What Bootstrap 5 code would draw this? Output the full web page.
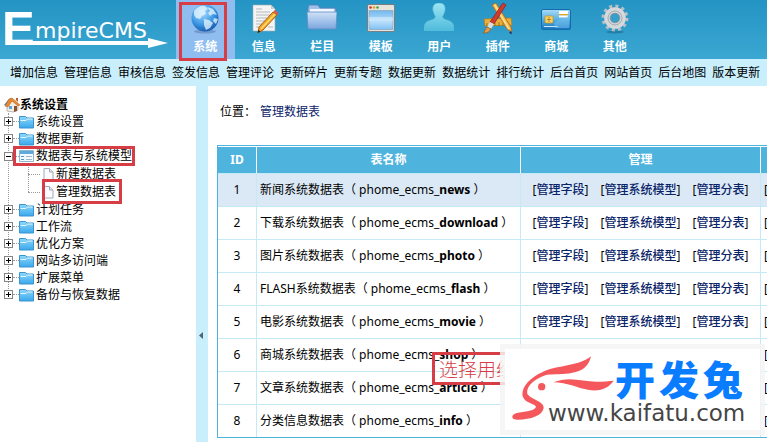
<!DOCTYPE html>
<html lang="zh-CN">
<head>
<meta charset="utf-8">
<meta name="viewport" content="width=device-width, initial-scale=1">
<title>EmpireCMS</title>
<link href="https://cdn.jsdelivr.net/npm/bootstrap@5.3.0/dist/css/bootstrap.min.css" rel="stylesheet">
<style>
  :root { --red: #d63d45; --pale: #c9effd; --edge: #4eb4de; }
  body { font: 12px/18px "Noto Sans", "Noto Sans CJK SC", sans-serif; color: #000; background: #fff; overflow: hidden; }
  a { color: inherit; text-decoration: none; }
  svg { display: block; flex: none; }
  .topbar { height: 59px; background: linear-gradient(#2494c4, #3ba7d2); }
  .brand { width: 176px; }
  .tabs { width: 468px; }
  .tab { color: #fff; font-weight: 700; padding-top: 3px; }
  .tab span { line-height: 18px; margin-top: 3px; }
  .tab.active { background: #90bdf0; }
  .marked { position: relative; }
  .marked::after { content: ""; position: absolute; border: 3px solid var(--red); pointer-events: none; z-index: 2; }
  .tab.marked::after { inset: 2px 8px -2px 3px; }
  .submenu { height: 27px; gap: 6px; padding-left: 10px; background: var(--pale); white-space: nowrap; }
  .side { width: 196px; padding: 10px 0 0 4px; }
  .splitter { width: 12px; background: var(--pale); padding-top: 241px; }
  .splitter button { border: 0; background: none; padding: 0 0 0 2px; }
  .tree, .tree ul { list-style: none; margin: 0; padding: 0; }
  .tree { position: relative; }
  .tree::before { content: ""; position: absolute; left: 4px; top: 0; height: 178px; border-left: 1px dotted #999; }
  .node { height: 17px; }
  .node.tall { height: 18px; }
  .toggle { position: relative; width: 9px; height: 9px; padding: 0; border: 1px solid #848484; background: #fff; }
  .toggle::before { content: ""; position: absolute; left: 1px; top: 3px; width: 5px; height: 1px; background: #000; }
  .toggle.plus::after { content: ""; position: absolute; left: 3px; top: 1px; width: 1px; height: 5px; background: #000; }
  .dots { width: 6px; border-top: 1px dotted #999; }
  .node a { gap: 2px; }
  .branch a.marked::after { inset: -1px -3px -1px -6px; }
  .leaf { height: 18px; padding-left: 24px; }
  .leaf .dots { width: 12px; }
  .leaf-line { position: relative; }
  .leaf-line::before { content: ""; position: absolute; left: 24px; top: 0; height: 27px; border-left: 1px dotted #999; }
  .leaf a.marked::after { inset: -4px -6px -3px 2px; }
  .crumbs { padding: 17px 0 0 12px; gap: 4px; }
  .navy { color: #0b2468; }
  .grid { margin: 24px 0 0 9px; width: 680px; table-layout: fixed; border: 1px solid var(--edge); border-collapse: separate; border-spacing: 0; }
  .grid th { height: 27px; padding: 0; color: #fff; background: var(--edge); text-align: center; border-top: 1px solid #fff; border-right: 1px solid #fff; }
  .grid td { height: 33px; padding: 0 3px; border-right: 1px solid #c6e9f6; border-top: 1px solid #c6e9f6; white-space: nowrap; }
  .grid tr:first-child td { background: #dbe9f6; }
  .links { gap: 12px; }
  .links a { font-weight: 500; }
  .note { position: absolute; left: 224px; top: 266px; padding: 0 4px; height: 33px; border: 3px solid var(--red); color: var(--red); font: 300 19px/27px "Noto Sans CJK SC", sans-serif; white-space: nowrap; }
  .stamp { position: absolute; right: 2px; top: 258px; width: 265px; height: 91px; padding: 5px; background: rgba(246,244,245,.85); }
  .stamp-in { position: relative; height: 81px; background: #fff; }
  .stamp svg { position: absolute; left: 6px; top: 6px; }
  .stamp-name { position: absolute; left: 110px; top: 9px; gap: 4px; color: #0a7cff; font: 900 40px/40px "Noto Sans CJK SC", sans-serif; }
  .stamp-url { position: absolute; left: 43px; top: 51px; color: #454545; font: 23px/26px "DejaVu Sans", sans-serif; }
</style>
</head>
<body class="d-flex flex-column min-vh-100">
<svg width="0" height="0" class="position-absolute" aria-hidden="true">
  <defs>
    <linearGradient id="fold" x1="0" y1="0" x2="0" y2="1"><stop stop-color="#8fd8fa"/><stop offset="1" stop-color="#3aa8ec"/></linearGradient>
    <symbol id="folder" viewBox="0 0 15 14"><path d="M.5 1.500h6l1.500 1.500h6.500v10h-14z" fill="url(#fold)" stroke="#3b93cf"/><path d="M1.500 5.500h5.500l1.500-1.500h5" fill="none" stroke="#e3f6ff"/></symbol>
    <symbol id="window" viewBox="0 0 15 14"><path d="M.5 1.500h14v11h-14z" fill="#f4fafd" stroke="#8fb4cc"/><path d="M1 2h13v3h-13z" fill="#5fa9dc"/><path d="M2 7.500h3M2 10.500h3" stroke="#4d98d0"/><path d="M7 7.500h6M7 10.500h6" stroke="#9db9c9"/></symbol>
    <symbol id="doc" viewBox="0 0 13 14"><path d="M2.500 1.500h5.500l3.500 3.500v8h-9z" fill="#fbfcff" stroke="#a5a9b5"/><path d="M8 1.500v3.500h3.500" fill="#dce8f5" stroke="#a5a9b5"/></symbol>
  </defs>
</svg>

<header class="topbar d-flex">
  <a class="brand" href="#" aria-label="EmpireCMS">
    <svg width="176" height="59" viewBox="0 0 176 59" fill="#fff">
      <text x="2" y="45" font-family="Liberation Sans, sans-serif" font-weight="700" font-size="49">E</text>
      <text x="35" y="38" font-family="DejaVu Sans, sans-serif" font-size="22">mpireCMS</text>
      <path d="M6 41h142v-3l20 5-20 5v-3H6z"/>
    </svg>
  </a>
  <nav class="tabs d-flex">
    <a href="#" class="tab active marked d-flex flex-column align-items-center flex-fill w-100">
      <svg width="30" height="32" viewBox="0 0 30 32"><defs><radialGradient id="gl" cx=".4" cy=".3" r=".75"><stop stop-color="#a7defc"/><stop offset=".6" stop-color="#3b96e4"/><stop offset="1" stop-color="#1354a8"/></radialGradient></defs><ellipse cx="15" cy="28.500" rx="11" ry="2" fill="#5577aa" opacity=".5"/><circle cx="15" cy="15" r="13.500" fill="url(#gl)"/><path d="M4 8c3-4 7-6 11-5l3 3-3 2 1 3-4 2-2 3-4-1-2-3zM17 4l6 2 4 6-4-1-3 2-2-3 2-2zM14 16l5 1 4 3-3 5-4 2-2-5zM24 15l4 1-2 5-3-3z" fill="#e9f7ff" opacity=".75"/></svg>
      <span>系统</span></a>
    <a href="#" class="tab d-flex flex-column align-items-center flex-fill w-100">
      <svg width="30" height="32" viewBox="0 0 30 32"><path d="M4 2h18l4 4v22H4z" fill="#f3f4f3" stroke="#a6adb0" stroke-width=".6"/><path d="M22 2v4h4" fill="#ccc"/><path d="M7 6h6M7 9h14M7 12h14M7 15h11M7 18h9M7 21h6M7 24h5M19 24h5" stroke="#b4b9bb"/><path d="M24 9l4 3-14 15-5 3 1-6z" fill="#f5a623" stroke="#a6601c"/><path d="M26 11L12 26" stroke="#ffdc72" stroke-width="1.500"/><path d="M24 9l4 3 1.500-2-3.500-3z" fill="#d75d4f"/><path d="M8.500 30l1-3 2 1.500z" fill="#222"/></svg>
      <span>信息</span></a>
    <a href="#" class="tab d-flex flex-column align-items-center flex-fill w-100">
      <svg width="30" height="32" viewBox="0 0 30 32"><defs><linearGradient id="bf" x1="0" y1="0" x2="0" y2="1"><stop stop-color="#cfe1f7"/><stop offset="1" stop-color="#7ba7df"/></linearGradient></defs><path d="M1 5l1-3h9l2 3h15l1 2v18H1z" fill="#9fbfe8" stroke="#547fb8" stroke-width=".8"/><path d="M3 6h24v5H3z" fill="#f0f6fd"/><path d="M0 9h30l-1 17H1z" fill="url(#bf)" stroke="#638dc4" stroke-width=".8"/></svg>
      <span>栏目</span></a>
    <a href="#" class="tab d-flex flex-column align-items-center flex-fill w-100">
      <svg width="30" height="32" viewBox="0 0 30 32"><defs><linearGradient id="wn" x1="0" y1="0" x2="0" y2="1"><stop stop-color="#74b9ee"/><stop offset=".6" stop-color="#b8defa"/><stop offset="1" stop-color="#7fc0f2"/></linearGradient></defs><rect x="1.500" y="1.500" width="27" height="27" rx="1.500" fill="#e7e4dc" stroke="#777f85"/><path d="M3 7.500h24v19H3z" fill="url(#wn)" stroke="#87a6bc" stroke-width=".7"/><path d="M3 14h24v4H3z" fill="#d4ecfd" opacity=".6"/><circle cx="4.500" cy="4.500" r="1.300" fill="#d8302b"/><circle cx="8" cy="4.500" r="1.300" fill="#e0a124"/><circle cx="11.500" cy="4.500" r="1.300" fill="#46a33e"/></svg>
      <span>模板</span></a>
    <a href="#" class="tab d-flex flex-column align-items-center flex-fill w-100">
      <svg width="30" height="32" viewBox="0 0 30 32"><defs><linearGradient id="us" x1="0" y1="0" x2="0" y2="1"><stop stop-color="#9ce4f3"/><stop offset="1" stop-color="#50bcdc"/></linearGradient></defs><path d="M15 0c6 0 7 5 5.500 9-.7 2-1.500 3.500-2 4.500.5 3 3 3 7 4.500 3.500 1.500 4.500 4 4.500 9.500H0C0 22 1 19.500 4.500 18c4-1.500 6.500-1.500 7-4.500-.5-1-1.300-2.500-2-4.500C8 5 9 0 15 0z" fill="url(#us)" stroke="#62c5de" stroke-width=".6"/></svg>
      <span>用户</span></a>
    <a href="#" class="tab d-flex flex-column align-items-center flex-fill w-100">
      <svg width="32" height="32" viewBox="0 0 32 32"><path d="M2 16l27-1 1 7-27 1z" fill="#e9b13b" stroke="#b27a1b" stroke-width=".7"/><path d="M5 20v3M9 19v4M13 20v3M17 19v4M21 20v3M25 19v4" stroke="#8b5c15" stroke-width=".7"/><path d="M10 2l4-2 15 24 1 5-5-3z" fill="#f3b344" stroke="#a76a20" stroke-width=".8"/><path d="M12.500 1.500L27 26" stroke="#ffe293" stroke-width="1.500"/><path d="M30 31l-3-1 2-2z" fill="#24205a"/><path d="M21 0l3 2-12 19-4-2z" fill="#d03a33" stroke="#862019" stroke-width=".7"/><path d="M8 19l4 2-3 5-4-2z" fill="#d8dde1"/><path d="M5 24l4 2c-2 4-5 4-8 4 2-2 2-4 4-6z" fill="#e39b45" stroke="#8c5422" stroke-width=".7"/></svg>
      <span>插件</span></a>
    <a href="#" class="tab d-flex flex-column align-items-center flex-fill w-100">
      <svg width="30" height="32" viewBox="0 0 30 32"><defs><linearGradient id="cd" x1="0" y1="0" x2="0" y2="1"><stop stop-color="#a8dcf7"/><stop offset=".5" stop-color="#58afe4"/><stop offset="1" stop-color="#1674be"/></linearGradient></defs><rect x=".5" y="6.500" width="29" height="20" rx="1.500" fill="url(#cd)" stroke="#186bab"/><path d="M18 8h9v3h-9z" fill="#fff"/><path d="M18 11h9v1.500h-9z" fill="#e3a21f"/><path d="M18 12.500h9v2h-9z" fill="#fff"/><rect x="4" y="13" width="8" height="7" rx="1" fill="#f7d05e" stroke="#c58f22" stroke-width=".7"/><path d="M6 16.500h4M8 14v5" stroke="#ab7921" stroke-width=".8"/><path d="M3 23.500h14" stroke="#cceafa"/><path d="M13 20c6-5 10-3 15-8v13H14z" fill="#78c4ef" opacity=".5"/></svg>
      <span>商城</span></a>
    <a href="#" class="tab d-flex flex-column align-items-center flex-fill w-100">
      <svg width="30" height="32" viewBox="0 0 30 32"><ellipse cx="15" cy="29" rx="9" ry="1.500" fill="#1b698d" opacity=".6"/><circle cx="15" cy="15" r="11.500" fill="none" stroke="#b9bec3" stroke-width="4" stroke-dasharray="3 3.020"/><circle cx="15" cy="15" r="7.800" fill="none" stroke="#d6d9dc" stroke-width="6"/><circle cx="15" cy="15" r="7" fill="none" stroke="#a3a9af" stroke-width="1"/><circle cx="15" cy="15" r="4.800" fill="#349fcb" stroke="#8f979d"/></svg>
      <span>其他</span></a>
  </nav>
</header>

<nav class="submenu d-flex align-items-center">
  <a href="#">增加信息</a><a href="#">管理信息</a><a href="#">审核信息</a><a href="#">签发信息</a><a href="#">管理评论</a><a href="#">更新碎片</a><a href="#">更新专题</a><a href="#">数据更新</a><a href="#">数据统计</a><a href="#">排行统计</a><a href="#">后台首页</a><a href="#">网站首页</a><a href="#">后台地图</a><a href="#">版本更新</a>
</nav>

<div class="d-flex flex-grow-1">
  <aside class="side flex-shrink-0">
    <div class="node d-flex align-items-center fw-bold"><svg width="16" height="16" viewBox="0 0 16 16"><path d="M3 8v6l6 1 5-2V7L9 3z" fill="#f1eee6" stroke="#9a8f85" stroke-width=".6"/><path d="M0 8l5-6 3-1-5 8z" fill="#3a86c4"/><path d="M5 2l3-1 8 7-2 1-6-5-4 6-3-1z" fill="#e9892e" stroke="#b65b18" stroke-width=".5"/><path d="M10 9h3v5l-3 1z" fill="#8a5230"/><path d="M5 9h3v3H5z" fill="#5ea5d8"/><path d="M12 1h2v4l-2-2z" fill="#b65b3a"/></svg><span>系统设置</span></div>
    <ul class="tree">
      <li class="node d-flex align-items-center"><button class="toggle plus" aria-label="展开"></button><i class="dots"></i><a href="#" class="d-flex align-items-center"><svg width="15" height="14"><use href="#folder"/></svg>系统设置</a></li>
      <li class="node d-flex align-items-center"><button class="toggle plus" aria-label="展开"></button><i class="dots"></i><a href="#" class="d-flex align-items-center"><svg width="15" height="14"><use href="#folder"/></svg>数据更新</a></li>
      <li class="branch">
        <div class="node tall d-flex align-items-center"><button class="toggle" aria-label="收起"></button><i class="dots"></i><a href="#" class="marked d-flex align-items-center"><svg width="15" height="14"><use href="#window"/></svg>数据表与系统模型</a></div>
        <ul class="leaf-line">
          <li class="leaf d-flex align-items-center"><i class="dots"></i><a href="#" class="d-flex align-items-center"><svg width="16" height="14"><use href="#doc"/></svg>新建数据表</a></li>
          <li class="leaf d-flex align-items-center"><i class="dots"></i><a href="#" class="marked d-flex align-items-center"><svg width="16" height="14"><use href="#doc"/></svg>管理数据表</a></li>
        </ul>
      </li>
      <li class="node d-flex align-items-center"><button class="toggle plus" aria-label="展开"></button><i class="dots"></i><a href="#" class="d-flex align-items-center"><svg width="15" height="14"><use href="#folder"/></svg>计划任务</a></li>
      <li class="node d-flex align-items-center"><button class="toggle plus" aria-label="展开"></button><i class="dots"></i><a href="#" class="d-flex align-items-center"><svg width="15" height="14"><use href="#folder"/></svg>工作流</a></li>
      <li class="node d-flex align-items-center"><button class="toggle plus" aria-label="展开"></button><i class="dots"></i><a href="#" class="d-flex align-items-center"><svg width="15" height="14"><use href="#folder"/></svg>优化方案</a></li>
      <li class="node d-flex align-items-center"><button class="toggle plus" aria-label="展开"></button><i class="dots"></i><a href="#" class="d-flex align-items-center"><svg width="15" height="14"><use href="#folder"/></svg>网站多访问端</a></li>
      <li class="node d-flex align-items-center"><button class="toggle plus" aria-label="展开"></button><i class="dots"></i><a href="#" class="d-flex align-items-center"><svg width="15" height="14"><use href="#folder"/></svg>扩展菜单</a></li>
      <li class="node d-flex align-items-center"><button class="toggle plus" aria-label="展开"></button><i class="dots"></i><a href="#" class="d-flex align-items-center"><svg width="15" height="14"><use href="#folder"/></svg>备份与恢复数据</a></li>
    </ul>
  </aside>

  <div class="splitter flex-shrink-0"><button aria-label="收起菜单"><svg width="6" height="9" viewBox="0 0 6 9"><path d="M5 1v7L1 4.500z" fill="#4f6470"/></svg></button></div>

  <main class="flex-grow-1 position-relative overflow-hidden">
    <div class="crumbs d-flex"><span>位置：</span><a href="#" class="navy">管理数据表</a></div>
    <table class="grid">
      <colgroup><col style="width:39px"><col style="width:264px"><col style="width:240px"><col></colgroup>
      <thead><tr><th>ID</th><th>表名称</th><th>管理</th><th></th></tr></thead>
      <tbody>
        <tr><td class="text-center">1</td><td>新闻系统数据表（ phome_ecms_<b>news</b> ）</td><td><div class="links d-flex justify-content-center"><span>[<a href="#" class="navy">管理字段</a>]</span><span>[<a href="#" class="navy">管理系统模型</a>]</span><span>[<a href="#" class="navy">管理分表</a>]</span></div></td><td>[</td></tr>
        <tr><td class="text-center">2</td><td>下载系统数据表（ phome_ecms_<b>download</b> ）</td><td><div class="links d-flex justify-content-center"><span>[<a href="#" class="navy">管理字段</a>]</span><span>[<a href="#" class="navy">管理系统模型</a>]</span><span>[<a href="#" class="navy">管理分表</a>]</span></div></td><td>[</td></tr>
        <tr><td class="text-center">3</td><td>图片系统数据表（ phome_ecms_<b>photo</b> ）</td><td><div class="links d-flex justify-content-center"><span>[<a href="#" class="navy">管理字段</a>]</span><span>[<a href="#" class="navy">管理系统模型</a>]</span><span>[<a href="#" class="navy">管理分表</a>]</span></div></td><td>[</td></tr>
        <tr><td class="text-center">4</td><td>FLASH系统数据表（ phome_ecms_<b>flash</b> ）</td><td><div class="links d-flex justify-content-center"><span>[<a href="#" class="navy">管理字段</a>]</span><span>[<a href="#" class="navy">管理系统模型</a>]</span><span>[<a href="#" class="navy">管理分表</a>]</span></div></td><td>[</td></tr>
        <tr><td class="text-center">5</td><td>电影系统数据表（ phome_ecms_<b>movie</b> ）</td><td><div class="links d-flex justify-content-center"><span>[<a href="#" class="navy">管理字段</a>]</span><span>[<a href="#" class="navy">管理系统模型</a>]</span><span>[<a href="#" class="navy">管理分表</a>]</span></div></td><td>[</td></tr>
        <tr><td class="text-center">6</td><td>商城系统数据表（ phome_ecms_<b>shop</b> ）</td><td></td><td>[</td></tr>
        <tr><td class="text-center">7</td><td>文章系统数据表（ phome_ecms_<b>article</b> ）</td><td></td><td>[</td></tr>
        <tr><td class="text-center">8</td><td>分类信息数据表（ phome_ecms_<b>info</b> ）</td><td></td><td>[</td></tr>
      </tbody>
    </table>
    <div class="note">选择用组</div>
    <div class="stamp"><div class="stamp-in">
      <svg width="105" height="66" viewBox="35 44 315 198" fill="#f4585c"><path d="M275 48C240 78 170 75 130 95C85 115 65 145 70 168C78 192 108 188 110 200C106 212 75 214 52 218C34 224 34 238 55 238C95 238 130 225 133 203C135 182 92 176 84 160C80 142 98 118 140 104C185 98 262 112 275 48Z"/><path d="M162 126C210 106 250 124 290 124C310 124 330 122 343 121C325 148 295 153 270 149C230 143 205 126 162 126Z"/><circle cx="127" cy="139" r="11"/></svg>
      <div class="stamp-name d-flex"><span>开</span><span>发</span><span>兔</span></div>
      <div class="stamp-url">www.kaifatu.com</div>
    </div></div>
  </main>
</div>
<script src="https://cdn.jsdelivr.net/npm/bootstrap@5.3.0/dist/js/bootstrap.bundle.min.js"></script>
</body>
</html>
